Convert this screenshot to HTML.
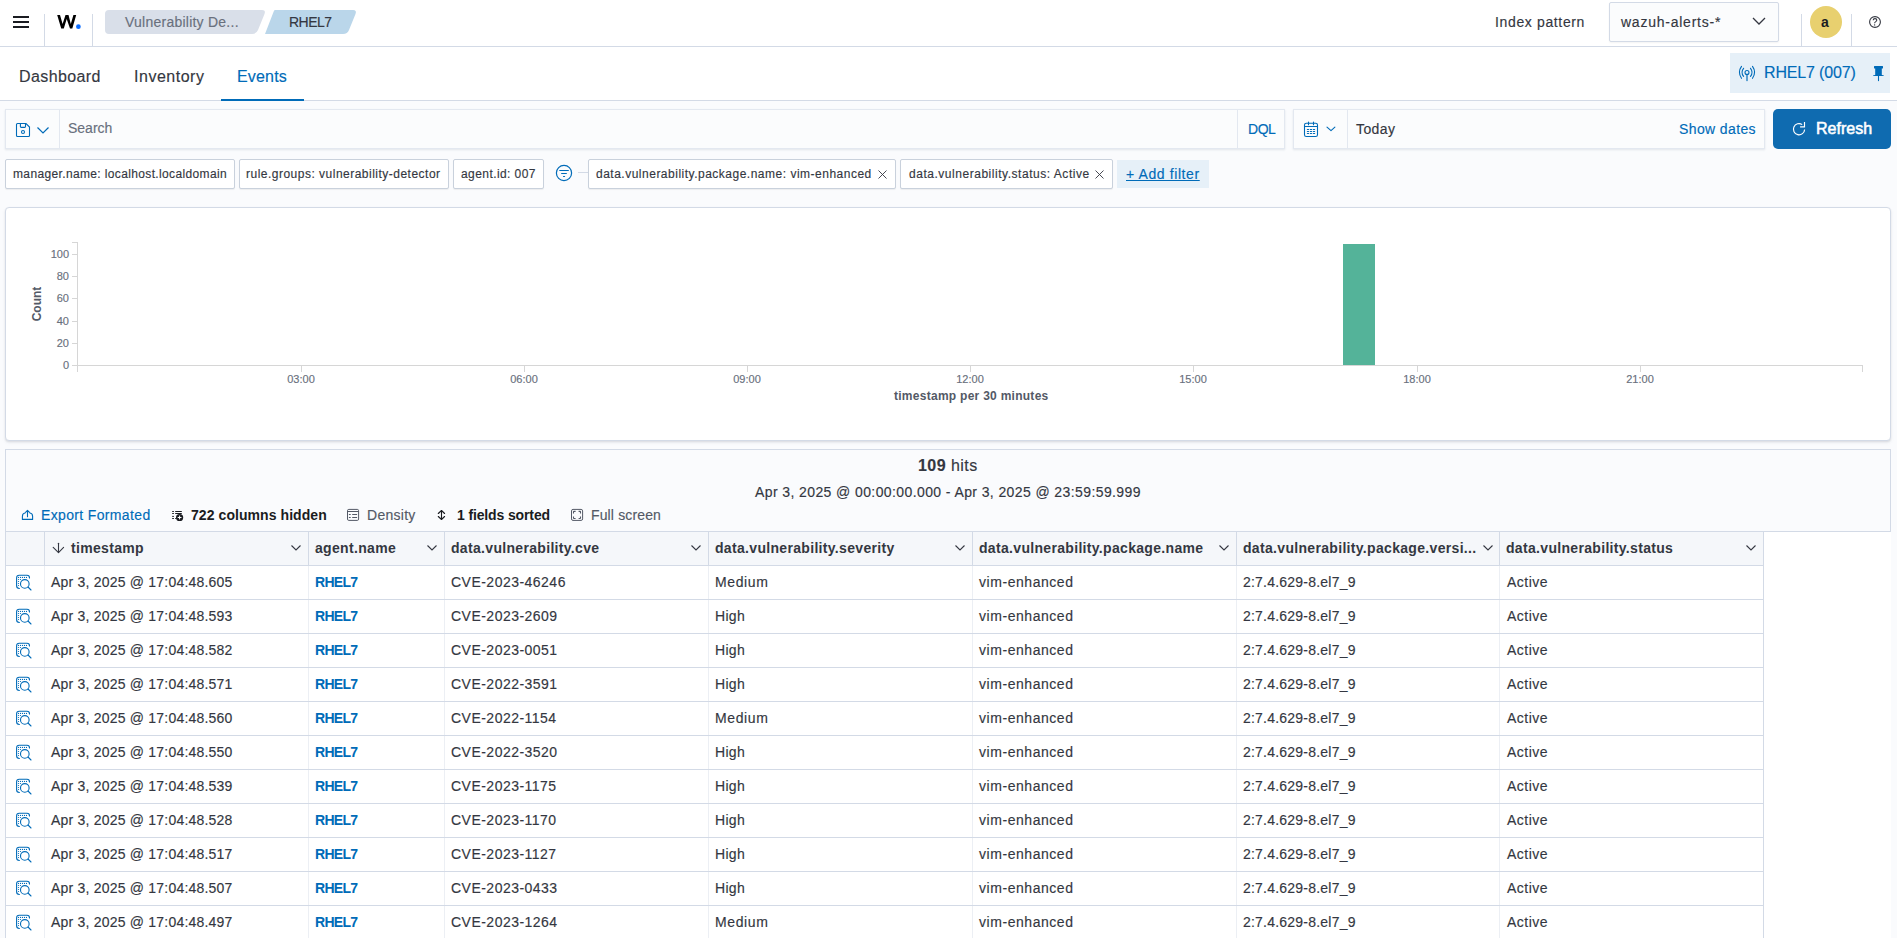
<!DOCTYPE html>
<html><head><meta charset="utf-8">
<style>
*{box-sizing:border-box;margin:0;padding:0}
html,body{width:1897px;height:938px;overflow:hidden;background:#fafbfd;font-family:"Liberation Sans",sans-serif;color:#343741}
.a{position:absolute}
.t{position:absolute;white-space:nowrap;line-height:1;font-family:"Liberation Sans",sans-serif}
.f11{font-size:11px}.f12{font-size:12px}.f14{font-size:14px}.f16{font-size:16px}
.b{font-weight:700}
.t:not(.b){-webkit-text-stroke:0.15px currentColor}
.pri{color:#006bb8}
svg{position:absolute;overflow:visible}
</style></head><body>
<!-- HEADER -->
<div class="a" style="left:0;top:0;width:1897px;height:47px;background:#fff;border-bottom:1px solid #d3dae6"></div>
<div class="a" style="left:13px;top:16px;width:16px;height:2px;background:#1a1c21"></div>
<div class="a" style="left:13px;top:21px;width:16px;height:2px;background:#1a1c21"></div>
<div class="a" style="left:13px;top:26px;width:16px;height:2px;background:#1a1c21"></div>
<div class="a" style="left:44px;top:14px;width:1px;height:32px;background:#d3dae6"></div>
<div class="a" style="left:92px;top:14px;width:1px;height:32px;background:#d3dae6"></div>
<svg style="left:0;top:0" width="90" height="40"><polygon points="57.2,15 60,15 62.6,23.9 65.5,15 68.5,15 70.8,23.9 73.4,15 76.2,15 72.3,28.6 70,28.6 66.7,19 63.8,28.6 61.2,28.6" fill="#000"/><circle cx="78.4" cy="26.7" r="2.35" fill="#0a6cff"/></svg>

<!-- breadcrumbs -->
<svg style="left:0;top:0" width="400" height="47"><path d="M109 10 H262 Q266 10 264.5 14 L258 30 Q256.5 34 252 34 H109 Q105 34 105 30 V14 Q105 10 109 10Z" fill="#d9dfe9"/><path d="M275 10 H353 Q357 10 355.5 14 L349 30 Q347.5 34 343 34 H265 L273.5 12 Q274 10 275 10Z" fill="#bad6ea"/></svg>
<div class="t f14" style="left:125px;top:15px;color:#69707d;letter-spacing:0.24px">Vulnerability De...</div>
<div class="t f14" style="left:289px;top:15px;color:#343741;letter-spacing:-0.5px">RHEL7</div>
<!-- right header -->
<div class="t f14" style="left:1495px;top:15px;color:#343741;letter-spacing:0.64px">Index pattern</div>
<div class="a" style="left:1609px;top:2px;width:170px;height:40px;background:#fbfcfd;border:1px solid #d3dae6;border-radius:2px;box-shadow:0 1px 2px rgba(0,0,0,.05)"></div>
<div class="t f14" style="left:1621px;top:15px;color:#343741;letter-spacing:0.76px">wazuh-alerts-*</div>
<svg style="left:1752px;top:17px" width="14" height="8"><path d="M1 1 L7 7 L13 1" fill="none" stroke="#343741" stroke-width="1.3"/></svg>
<div class="a" style="left:1801px;top:14px;width:1px;height:32px;background:#d3dae6"></div>
<div class="a" style="left:1810px;top:6px;width:32px;height:32px;border-radius:50%;background:#e8d06f"></div>
<div class="t f14 b" style="left:1821px;top:15px;color:#1a1c21">a</div>
<div class="a" style="left:1851px;top:14px;width:1px;height:32px;background:#d3dae6"></div>
<svg style="left:1869px;top:16px" width="13" height="13"><circle cx="6" cy="6" r="5.4" fill="none" stroke="#343741" stroke-width="1.1"/><path d="M4.2 4.3 Q4.2 2.6 6 2.6 Q7.8 2.6 7.8 4.1 Q7.8 5 6.8 5.6 Q5.6 6.3 5.6 7.3" fill="none" stroke="#343741" stroke-width="1.1"/><circle cx="5.6" cy="8.9" r="0.7" fill="#343741"/></svg>

<!-- TABS -->
<div class="a" style="left:0;top:47px;width:1897px;height:54px;background:#fff;border-bottom:1px solid #d3dae6"></div>
<div class="t f16" style="left:19px;top:69px;color:#343741;letter-spacing:0.4px">Dashboard</div>
<div class="t f16" style="left:134px;top:69px;color:#343741;letter-spacing:0.52px">Inventory</div>
<div class="t f16 pri" style="left:237px;top:69px;letter-spacing:0.18px">Events</div>
<div class="a" style="left:221px;top:99px;width:83px;height:2px;background:#006bb8"></div>
<div class="a" style="left:1730px;top:53px;width:160px;height:40px;background:#e6f0f8"></div>
<div class="t f16 pri" style="left:1764px;top:65px;letter-spacing:-0.15px">RHEL7 (007)</div>
<svg style="left:1734px;top:60px" width="30" height="26"><g fill="none" stroke="#006bb8" stroke-width="1.1" stroke-linecap="round"><path d="M7.5 6.4 Q3.3 12.35 7.5 18.3"/><path d="M9.6 8.3 Q6.4 12.35 9.6 16.4"/><path d="M16.5 8.3 Q19.6 12.35 16.5 16.4"/><path d="M18.5 6.4 Q22.7 12.35 18.5 18.3"/><circle cx="13" cy="12.5" r="2"/></g><path d="M13 14.6 V20.5" stroke="#006bb8" stroke-width="1.6" stroke-linecap="round" opacity=".75"/></svg>
<svg style="left:1866px;top:60px" width="24" height="26"><path d="M8.5 6 H16.5 Q17 6 17 6.5 V8 Q17 8.6 16.2 8.6 H15.8 V15 L17.6 15.2 Q18 15.4 17.6 16.1 H7.3 Q6.9 15.4 7.3 15.2 L9.2 15 V8.6 H8.8 Q8 8.6 8 8 V6.5 Q8 6 8.5 6Z" fill="#006bb8"/><path d="M12.5 16 V20.6" stroke="#006bb8" stroke-width="1.1" stroke-linecap="round"/></svg>


<!-- SEARCH ROW -->
<div class="a" style="left:5px;top:109px;width:1280px;height:40px;background:#fbfcfd;border:1px solid #e3e8f0;box-shadow:0 1px 2px rgba(152,162,179,.25)"></div>
<div class="a" style="left:59px;top:110px;width:1px;height:38px;background:#e3e8f0"></div>
<div class="a" style="left:1237px;top:110px;width:1px;height:38px;background:#e3e8f0"></div>
<svg style="left:16px;top:123px" width="14" height="14"><path d="M1.5 0.5 H10 L13.5 4 V12.5 Q13.5 13.5 12.5 13.5 H1.5 Q0.5 13.5 0.5 12.5 V1.5 Q0.5 0.5 1.5 0.5Z" fill="none" stroke="#006bb8" stroke-width="1.1"/><path d="M4.4 0.5 V3.6 Q4.4 4.4 5.2 4.4 H8.7 Q9.5 4.4 9.5 3.6 V0.5" fill="none" stroke="#006bb8" stroke-width="1.1"/><circle cx="7" cy="9" r="1.5" fill="none" stroke="#006bb8" stroke-width="1.1"/></svg>
<svg style="left:37px;top:127px" width="12" height="7"><path d="M0.5 0.5 L6 6 L11.5 0.5" fill="none" stroke="#006bb8" stroke-width="1.2"/></svg>
<div class="t f14" style="left:68px;top:121px;color:#69707d">Search</div>
<div class="t f14 pri" style="left:1248px;top:122px;letter-spacing:-0.45px">DQL</div>
<div class="a" style="left:1293px;top:109px;width:472px;height:40px;background:#fbfcfd;border:1px solid #e3e8f0;box-shadow:0 1px 2px rgba(152,162,179,.25)"></div>
<div class="a" style="left:1347px;top:110px;width:1px;height:38px;background:#e3e8f0"></div>
<svg style="left:1298px;top:116px" width="42" height="26"><g fill="none" stroke="#006bb8" stroke-width="1.1" stroke-linecap="round" stroke-linejoin="round"><rect x="6.5" y="7.3" width="13" height="13.2" rx="1.8"/><path d="M6.5 10.5 H19.5 M10.5 6.1 V8.7 M15.5 6.1 V8.7"/><path d="M9.4 13.5 H10.6 M12.4 13.5 H13.6 M15.4 13.5 H16.6 M9.4 15.5 H10.6 M12.4 15.5 H13.6 M15.4 15.5 H16.6 M9.4 17.5 H10.6 M12.4 17.5 H13.6 M15.4 17.5 H16.6" stroke-width="1.2"/><path d="M29 11.1 L33 14.7 L36.9 11.1"/></g></svg>

<div class="t f14" style="left:1356px;top:122px;color:#343741;letter-spacing:0.41px">Today</div>
<div class="t f14 pri" style="left:1679px;top:122px;letter-spacing:0.38px">Show dates</div>
<div class="a" style="left:1773px;top:109px;width:118px;height:40px;background:#0f6bb0;border-radius:5px"></div>
<svg style="left:1786px;top:112px" width="26" height="34"><g fill="none" stroke="#fff" stroke-width="1.15"><path d="M18.6 17.4 A5.6 5.6 0 1 1 16.2 12.6"/><path d="M18.5 10.1 V14.9 H14.1"/></g></svg>
<div class="t f16" style="left:1816px;top:121px;color:#fff;letter-spacing:0.02px;-webkit-text-stroke:0.55px #fff">Refresh</div>

<!-- FILTERS -->
<div class="a" style="left:5px;top:159px;width:230px;height:30px;background:#fff;border:1px solid #c9d1dc;border-radius:2px;box-shadow:0 1px 1px rgba(0,0,0,.06)"></div>
<div class="t f12" style="left:13px;top:168px;letter-spacing:0.36px">manager.name: localhost.localdomain</div>
<div class="a" style="left:239px;top:159px;width:210px;height:30px;background:#fff;border:1px solid #c9d1dc;border-radius:2px;box-shadow:0 1px 1px rgba(0,0,0,.06)"></div>
<div class="t f12" style="left:246px;top:168px;letter-spacing:0.49px">rule.groups: vulnerability-detector</div>
<div class="a" style="left:453px;top:159px;width:91px;height:30px;background:#fff;border:1px solid #c9d1dc;border-radius:2px;box-shadow:0 1px 1px rgba(0,0,0,.06)"></div>
<div class="t f12" style="left:461px;top:168px;letter-spacing:0.42px">agent.id: 007</div>
<svg style="left:555px;top:164px" width="18" height="18"><circle cx="9" cy="9" r="7.6" fill="none" stroke="#006bb8" stroke-width="1.2"/><path d="M4.7 6.5 H13.4 M6.6 9.5 H11.4 M8.5 12.5 H9.6" stroke="#006bb8" stroke-width="1.1" stroke-linecap="round"/></svg>
<div class="a" style="left:578px;top:172px;width:10px;height:1px;background:#d3dae6"></div>
<div class="a" style="left:588px;top:159px;width:308px;height:30px;background:#fff;border:1px solid #c9d1dc;border-radius:2px;box-shadow:0 1px 1px rgba(0,0,0,.06)"></div>
<div class="t f12" style="left:596px;top:168px;letter-spacing:0.5px">data.vulnerability.package.name: vim-enhanced</div>
<svg style="left:878px;top:170px" width="9" height="9"><path d="M0.5 0.5 L8.5 8.5 M8.5 0.5 L0.5 8.5" stroke="#343741" stroke-width="0.9"/></svg>
<div class="a" style="left:900px;top:159px;width:213px;height:30px;background:#fff;border:1px solid #c9d1dc;border-radius:2px;box-shadow:0 1px 1px rgba(0,0,0,.06)"></div>
<div class="t f12" style="left:909px;top:168px;letter-spacing:0.53px">data.vulnerability.status: Active</div>
<svg style="left:1095px;top:170px" width="9" height="9"><path d="M0.5 0.5 L8.5 8.5 M8.5 0.5 L0.5 8.5" stroke="#343741" stroke-width="0.9"/></svg>
<div class="a" style="left:1117px;top:160px;width:92px;height:28px;background:#e6f0f8"></div>
<div class="t f14 pri" style="left:1126px;top:167px;letter-spacing:0.6px;text-decoration:underline">+ Add filter</div>

<!-- CHART PANEL -->
<div class="a" style="left:5px;top:207px;width:1886px;height:234px;background:#fff;border:1px solid #d3dae6;border-radius:4px;box-shadow:0 1px 2px rgba(0,0,0,.08),0 2px 3px rgba(152,162,179,.15)"></div>
<svg style="left:0;top:0" width="1897" height="440">
<g stroke="#d6d6d6" stroke-width="1" shape-rendering="crispEdges">
<path d="M77.5 242 V372"/>
<path d="M72 242.5 H77.5"/>
<path d="M72 365.5 H1863"/>
<path d="M1862.5 365 V372"/>
<path d="M72 254.5 H77"/>
<path d="M72 276.5 H77"/>
<path d="M72 298.5 H77"/>
<path d="M72 321.5 H77"/>
<path d="M72 343.5 H77"/>
<path d="M72 365.5 H77"/>
<path d="M301.5 365 V372"/>
<path d="M524.5 365 V372"/>
<path d="M747.5 365 V372"/>
<path d="M970.5 365 V372"/>
<path d="M1193.5 365 V372"/>
<path d="M1417.5 365 V372"/>
<path d="M1640.5 365 V372"/>
</g>
<rect x="1343" y="244" width="32" height="121" fill="#54b399"/>
</svg>
<div class="t f11" style="right:1828px;top:249px;color:#69707d;text-align:right">100</div>
<div class="t f11" style="right:1828px;top:271px;color:#69707d;text-align:right">80</div>
<div class="t f11" style="right:1828px;top:293px;color:#69707d;text-align:right">60</div>
<div class="t f11" style="right:1828px;top:316px;color:#69707d;text-align:right">40</div>
<div class="t f11" style="right:1828px;top:338px;color:#69707d;text-align:right">20</div>
<div class="t f11" style="right:1828px;top:360px;color:#69707d;text-align:right">0</div>
<div class="t f11" style="left:286.5px;top:374px;width:29px;text-align:center;color:#69707d">03:00</div>
<div class="t f11" style="left:509.5px;top:374px;width:29px;text-align:center;color:#69707d">06:00</div>
<div class="t f11" style="left:732.5px;top:374px;width:29px;text-align:center;color:#69707d">09:00</div>
<div class="t f11" style="left:955.5px;top:374px;width:29px;text-align:center;color:#69707d">12:00</div>
<div class="t f11" style="left:1178.5px;top:374px;width:29px;text-align:center;color:#69707d">15:00</div>
<div class="t f11" style="left:1402.5px;top:374px;width:29px;text-align:center;color:#69707d">18:00</div>
<div class="t f11" style="left:1625.5px;top:374px;width:29px;text-align:center;color:#69707d">21:00</div>
<div class="t f12 b" style="left:894px;top:390px;color:#535966;letter-spacing:0.27px">timestamp per 30 minutes</div>
<div class="t f12 b" style="left:19px;top:298px;width:35px;text-align:center;color:#535966;transform:rotate(-90deg);transform-origin:50% 50%">Count</div>

<!-- HITS PANEL -->
<div class="a" style="left:5px;top:531px;width:1886px;height:407px;background:#fff"></div>
<div class="a" style="left:5px;top:449px;width:1886px;height:83px;background:#fafbfd;border:1px solid #d3dae6;border-bottom-color:#d3dae6"></div>
<div class="t f16" style="left:918px;top:458px;color:#343741;letter-spacing:0.46px"><span class="b">109</span> hits</div>
<div class="t f14" style="left:755px;top:485px;color:#343741;letter-spacing:0.4px">Apr 3, 2025 @ 00:00:00.000 - Apr 3, 2025 @ 23:59:59.999</div>
<svg style="left:16px;top:502px" width="24" height="24"><g fill="none" stroke="#006bb8" stroke-width="1.1" stroke-linecap="round" stroke-linejoin="round"><path d="M9 11 Q6.4 11.5 6.4 14.2 V17.4 H16.6 V14.2 Q16.6 11.5 14 11"/><path d="M11.5 14.7 V8.3 M9.5 10.3 L11.5 8.3 L13.5 10.3"/></g></svg>
<div class="t f14 pri" style="left:41px;top:508px;letter-spacing:0.35px">Export Formated</div>
<svg style="left:166px;top:502px" width="24" height="24"><g stroke="#1a1c21" stroke-width="1" fill="none"><path d="M6.2 9.5 H7.9 M9.2 9.5 H15.8 M6.2 11.5 H7.9 M9.2 11.5 H15.8 M6.2 14.4 H7.9 M6.2 16.5 H7.9 M9.2 16.5 H10.5"/></g><circle cx="13.6" cy="15.5" r="3.6" fill="#1a1c21"/><path d="M13.6 13.6 V17.4 M11.7 15.5 H15.5" stroke="#fff" stroke-width="1"/></svg>
<div class="t f14 b" style="left:191px;top:508px;color:#1a1c21;letter-spacing:0.07px">722 columns hidden</div>
<svg style="left:342px;top:502px" width="24" height="24"><g fill="none" stroke="#535966" stroke-width="1"><rect x="5.5" y="7.4" width="11.1" height="11" rx="1.3"/><path d="M5.5 9.5 H16.6"/><path d="M6.9 12.5 H8.7 M10.2 12.5 H15.1 M6.9 15.5 H8.7 M10.2 15.5 H15.1" stroke-width="1.1"/></g></svg>
<div class="t f14" style="left:367px;top:508px;color:#535966;letter-spacing:0.27px">Density</div>
<svg style="left:430px;top:502px" width="24" height="24"><g fill="none" stroke="#1a1c21" stroke-width="1.1" stroke-linecap="round" stroke-linejoin="round"><path d="M11.5 9.2 V16.7"/><path d="M8.3 11.5 L11.5 8.5 L14.6 11.5"/><path d="M8.3 14.5 L11.5 17.5 L14.6 14.5"/></g></svg>
<div class="t f14 b" style="left:457px;top:508px;color:#1a1c21;letter-spacing:-0.13px">1 fields sorted</div>
<svg style="left:565px;top:502px" width="24" height="24"><g fill="none" stroke="#535966" stroke-width="1"><rect x="6.5" y="7.4" width="11.1" height="11" rx="1.5"/><path d="M8.5 11.6 V9.9 Q8.5 9.4 9 9.4 H10.6 M13.6 9.4 H15.1 Q15.5 9.4 15.5 9.9 V11.6 M15.5 14.4 V16 Q15.5 16.5 15.1 16.5 H13.6 M10.6 16.5 H9 Q8.5 16.5 8.5 16 V14.4" stroke-width="1.1"/></g></svg>
<div class="t f14" style="left:591px;top:508px;color:#535966;letter-spacing:0.14px">Full screen</div>
<div class="a" style="left:5px;top:531px;width:1759px;height:35px;background:#f5f7fa"></div>
<svg style="left:0;top:0" width="1897" height="938"><g stroke-width="1" shape-rendering="crispEdges">
<path stroke="#d3dae6" d="M5 531.5 H1891"/>
<path stroke="#d3dae6" d="M5.5 531 V938"/>
<path stroke="#d3dae6" d="M44.5 531 V566"/>
<path stroke="#eceff4" d="M44.5 566 V938"/>
<path stroke="#d3dae6" d="M308.5 531 V566"/>
<path stroke="#eceff4" d="M308.5 566 V938"/>
<path stroke="#d3dae6" d="M444.5 531 V566"/>
<path stroke="#eceff4" d="M444.5 566 V938"/>
<path stroke="#d3dae6" d="M708.5 531 V566"/>
<path stroke="#eceff4" d="M708.5 566 V938"/>
<path stroke="#d3dae6" d="M972.5 531 V566"/>
<path stroke="#eceff4" d="M972.5 566 V938"/>
<path stroke="#d3dae6" d="M1236.5 531 V566"/>
<path stroke="#eceff4" d="M1236.5 566 V938"/>
<path stroke="#d3dae6" d="M1499.5 531 V566"/>
<path stroke="#eceff4" d="M1499.5 566 V938"/>
<path stroke="#d3dae6" d="M1763.5 531 V938"/>
<path stroke="#d3dae6" d="M5 565.5 H1764"/>
<path stroke="#d3dae6" d="M5 599.5 H1764"/>
<path stroke="#d3dae6" d="M5 633.5 H1764"/>
<path stroke="#d3dae6" d="M5 667.5 H1764"/>
<path stroke="#d3dae6" d="M5 701.5 H1764"/>
<path stroke="#d3dae6" d="M5 735.5 H1764"/>
<path stroke="#d3dae6" d="M5 769.5 H1764"/>
<path stroke="#d3dae6" d="M5 803.5 H1764"/>
<path stroke="#d3dae6" d="M5 837.5 H1764"/>
<path stroke="#d3dae6" d="M5 871.5 H1764"/>
<path stroke="#d3dae6" d="M5 905.5 H1764"/>
<path stroke="#d3dae6" d="M5 939.5 H1764"/>
</g></svg>
<svg style="left:48px;top:536px" width="24" height="24"><g fill="none" stroke="#343741" stroke-width="1.1" stroke-linecap="round" stroke-linejoin="round"><path d="M10.5 7.3 V16.4"/><path d="M5.2 11.4 L10.5 16.6 L15.6 11.4"/></g></svg>
<div class="t f14 b" style="left:71px;top:541px;color:#343741;letter-spacing:0.32px">timestamp</div>
<svg style="left:291px;top:545px" width="10" height="6"><path d="M0.5 0.5 L5 5 L9.5 0.5" fill="none" stroke="#343741" stroke-width="1.1"/></svg>
<div class="t f14 b" style="left:315px;top:541px;color:#343741;letter-spacing:0.32px">agent.name</div>
<svg style="left:427px;top:545px" width="10" height="6"><path d="M0.5 0.5 L5 5 L9.5 0.5" fill="none" stroke="#343741" stroke-width="1.1"/></svg>
<div class="t f14 b" style="left:451px;top:541px;color:#343741;letter-spacing:0.32px">data.vulnerability.cve</div>
<svg style="left:691px;top:545px" width="10" height="6"><path d="M0.5 0.5 L5 5 L9.5 0.5" fill="none" stroke="#343741" stroke-width="1.1"/></svg>
<div class="t f14 b" style="left:715px;top:541px;color:#343741;letter-spacing:0.32px">data.vulnerability.severity</div>
<svg style="left:955px;top:545px" width="10" height="6"><path d="M0.5 0.5 L5 5 L9.5 0.5" fill="none" stroke="#343741" stroke-width="1.1"/></svg>
<div class="t f14 b" style="left:979px;top:541px;color:#343741;letter-spacing:0.32px">data.vulnerability.package.name</div>
<svg style="left:1219px;top:545px" width="10" height="6"><path d="M0.5 0.5 L5 5 L9.5 0.5" fill="none" stroke="#343741" stroke-width="1.1"/></svg>
<div class="t f14 b" style="left:1243px;top:541px;color:#343741;letter-spacing:0.32px">data.vulnerability.package.versi...</div>
<svg style="left:1483px;top:545px" width="10" height="6"><path d="M0.5 0.5 L5 5 L9.5 0.5" fill="none" stroke="#343741" stroke-width="1.1"/></svg>
<div class="t f14 b" style="left:1506px;top:541px;color:#343741;letter-spacing:0.32px">data.vulnerability.status</div>
<svg style="left:1746px;top:545px" width="10" height="6"><path d="M0.5 0.5 L5 5 L9.5 0.5" fill="none" stroke="#343741" stroke-width="1.1"/></svg>
<svg style="left:12px;top:572px" width="24" height="24"><g fill="none" stroke="#006bb8" stroke-width="1.1" stroke-linecap="round"><path d="M7.4 16.5 Q4.6 16.5 4.6 13.8 V6 Q4.6 3.3 7.3 3.3 H15 Q17.5 3.3 17.5 6"/><circle cx="12.8" cy="11.9" r="4.3"/><path d="M16 15 L19 18"/></g><g fill="#006bb8"><circle cx="6.5" cy="5.4" r=".6"/><circle cx="8.5" cy="5.4" r=".6"/><circle cx="10.5" cy="5.4" r=".6"/><circle cx="12.5" cy="5.4" r=".6"/><circle cx="14.5" cy="5.4" r=".6"/><circle cx="6.5" cy="7.5" r=".6"/><circle cx="8.5" cy="7.5" r=".6"/><circle cx="6.5" cy="9.5" r=".6"/><circle cx="6.5" cy="11.5" r=".6"/><circle cx="6.5" cy="13.5" r=".6"/></g></svg>
<div class="t f14" style="left:51px;top:575px;letter-spacing:0.21px">Apr 3, 2025 @ 17:04:48.605</div>
<div class="t f14 b pri" style="left:315px;top:575px;letter-spacing:-0.7px">RHEL7</div>
<div class="t f14" style="left:451px;top:575px;letter-spacing:0.48px">CVE-2023-46246</div>
<div class="t f14" style="left:715px;top:575px;letter-spacing:0.6px">Medium</div>
<div class="t f14" style="left:979px;top:575px;letter-spacing:0.55px">vim-enhanced</div>
<div class="t f14" style="left:1243px;top:575px;letter-spacing:0.22px">2:7.4.629-8.el7_9</div>
<div class="t f14" style="left:1507px;top:575px;letter-spacing:0.5px">Active</div>
<svg style="left:12px;top:606px" width="24" height="24"><g fill="none" stroke="#006bb8" stroke-width="1.1" stroke-linecap="round"><path d="M7.4 16.5 Q4.6 16.5 4.6 13.8 V6 Q4.6 3.3 7.3 3.3 H15 Q17.5 3.3 17.5 6"/><circle cx="12.8" cy="11.9" r="4.3"/><path d="M16 15 L19 18"/></g><g fill="#006bb8"><circle cx="6.5" cy="5.4" r=".6"/><circle cx="8.5" cy="5.4" r=".6"/><circle cx="10.5" cy="5.4" r=".6"/><circle cx="12.5" cy="5.4" r=".6"/><circle cx="14.5" cy="5.4" r=".6"/><circle cx="6.5" cy="7.5" r=".6"/><circle cx="8.5" cy="7.5" r=".6"/><circle cx="6.5" cy="9.5" r=".6"/><circle cx="6.5" cy="11.5" r=".6"/><circle cx="6.5" cy="13.5" r=".6"/></g></svg>
<div class="t f14" style="left:51px;top:609px;letter-spacing:0.21px">Apr 3, 2025 @ 17:04:48.593</div>
<div class="t f14 b pri" style="left:315px;top:609px;letter-spacing:-0.7px">RHEL7</div>
<div class="t f14" style="left:451px;top:609px;letter-spacing:0.48px">CVE-2023-2609</div>
<div class="t f14" style="left:715px;top:609px;letter-spacing:0.3px">High</div>
<div class="t f14" style="left:979px;top:609px;letter-spacing:0.55px">vim-enhanced</div>
<div class="t f14" style="left:1243px;top:609px;letter-spacing:0.22px">2:7.4.629-8.el7_9</div>
<div class="t f14" style="left:1507px;top:609px;letter-spacing:0.5px">Active</div>
<svg style="left:12px;top:640px" width="24" height="24"><g fill="none" stroke="#006bb8" stroke-width="1.1" stroke-linecap="round"><path d="M7.4 16.5 Q4.6 16.5 4.6 13.8 V6 Q4.6 3.3 7.3 3.3 H15 Q17.5 3.3 17.5 6"/><circle cx="12.8" cy="11.9" r="4.3"/><path d="M16 15 L19 18"/></g><g fill="#006bb8"><circle cx="6.5" cy="5.4" r=".6"/><circle cx="8.5" cy="5.4" r=".6"/><circle cx="10.5" cy="5.4" r=".6"/><circle cx="12.5" cy="5.4" r=".6"/><circle cx="14.5" cy="5.4" r=".6"/><circle cx="6.5" cy="7.5" r=".6"/><circle cx="8.5" cy="7.5" r=".6"/><circle cx="6.5" cy="9.5" r=".6"/><circle cx="6.5" cy="11.5" r=".6"/><circle cx="6.5" cy="13.5" r=".6"/></g></svg>
<div class="t f14" style="left:51px;top:643px;letter-spacing:0.21px">Apr 3, 2025 @ 17:04:48.582</div>
<div class="t f14 b pri" style="left:315px;top:643px;letter-spacing:-0.7px">RHEL7</div>
<div class="t f14" style="left:451px;top:643px;letter-spacing:0.48px">CVE-2023-0051</div>
<div class="t f14" style="left:715px;top:643px;letter-spacing:0.3px">High</div>
<div class="t f14" style="left:979px;top:643px;letter-spacing:0.55px">vim-enhanced</div>
<div class="t f14" style="left:1243px;top:643px;letter-spacing:0.22px">2:7.4.629-8.el7_9</div>
<div class="t f14" style="left:1507px;top:643px;letter-spacing:0.5px">Active</div>
<svg style="left:12px;top:674px" width="24" height="24"><g fill="none" stroke="#006bb8" stroke-width="1.1" stroke-linecap="round"><path d="M7.4 16.5 Q4.6 16.5 4.6 13.8 V6 Q4.6 3.3 7.3 3.3 H15 Q17.5 3.3 17.5 6"/><circle cx="12.8" cy="11.9" r="4.3"/><path d="M16 15 L19 18"/></g><g fill="#006bb8"><circle cx="6.5" cy="5.4" r=".6"/><circle cx="8.5" cy="5.4" r=".6"/><circle cx="10.5" cy="5.4" r=".6"/><circle cx="12.5" cy="5.4" r=".6"/><circle cx="14.5" cy="5.4" r=".6"/><circle cx="6.5" cy="7.5" r=".6"/><circle cx="8.5" cy="7.5" r=".6"/><circle cx="6.5" cy="9.5" r=".6"/><circle cx="6.5" cy="11.5" r=".6"/><circle cx="6.5" cy="13.5" r=".6"/></g></svg>
<div class="t f14" style="left:51px;top:677px;letter-spacing:0.21px">Apr 3, 2025 @ 17:04:48.571</div>
<div class="t f14 b pri" style="left:315px;top:677px;letter-spacing:-0.7px">RHEL7</div>
<div class="t f14" style="left:451px;top:677px;letter-spacing:0.48px">CVE-2022-3591</div>
<div class="t f14" style="left:715px;top:677px;letter-spacing:0.3px">High</div>
<div class="t f14" style="left:979px;top:677px;letter-spacing:0.55px">vim-enhanced</div>
<div class="t f14" style="left:1243px;top:677px;letter-spacing:0.22px">2:7.4.629-8.el7_9</div>
<div class="t f14" style="left:1507px;top:677px;letter-spacing:0.5px">Active</div>
<svg style="left:12px;top:708px" width="24" height="24"><g fill="none" stroke="#006bb8" stroke-width="1.1" stroke-linecap="round"><path d="M7.4 16.5 Q4.6 16.5 4.6 13.8 V6 Q4.6 3.3 7.3 3.3 H15 Q17.5 3.3 17.5 6"/><circle cx="12.8" cy="11.9" r="4.3"/><path d="M16 15 L19 18"/></g><g fill="#006bb8"><circle cx="6.5" cy="5.4" r=".6"/><circle cx="8.5" cy="5.4" r=".6"/><circle cx="10.5" cy="5.4" r=".6"/><circle cx="12.5" cy="5.4" r=".6"/><circle cx="14.5" cy="5.4" r=".6"/><circle cx="6.5" cy="7.5" r=".6"/><circle cx="8.5" cy="7.5" r=".6"/><circle cx="6.5" cy="9.5" r=".6"/><circle cx="6.5" cy="11.5" r=".6"/><circle cx="6.5" cy="13.5" r=".6"/></g></svg>
<div class="t f14" style="left:51px;top:711px;letter-spacing:0.21px">Apr 3, 2025 @ 17:04:48.560</div>
<div class="t f14 b pri" style="left:315px;top:711px;letter-spacing:-0.7px">RHEL7</div>
<div class="t f14" style="left:451px;top:711px;letter-spacing:0.48px">CVE-2022-1154</div>
<div class="t f14" style="left:715px;top:711px;letter-spacing:0.6px">Medium</div>
<div class="t f14" style="left:979px;top:711px;letter-spacing:0.55px">vim-enhanced</div>
<div class="t f14" style="left:1243px;top:711px;letter-spacing:0.22px">2:7.4.629-8.el7_9</div>
<div class="t f14" style="left:1507px;top:711px;letter-spacing:0.5px">Active</div>
<svg style="left:12px;top:742px" width="24" height="24"><g fill="none" stroke="#006bb8" stroke-width="1.1" stroke-linecap="round"><path d="M7.4 16.5 Q4.6 16.5 4.6 13.8 V6 Q4.6 3.3 7.3 3.3 H15 Q17.5 3.3 17.5 6"/><circle cx="12.8" cy="11.9" r="4.3"/><path d="M16 15 L19 18"/></g><g fill="#006bb8"><circle cx="6.5" cy="5.4" r=".6"/><circle cx="8.5" cy="5.4" r=".6"/><circle cx="10.5" cy="5.4" r=".6"/><circle cx="12.5" cy="5.4" r=".6"/><circle cx="14.5" cy="5.4" r=".6"/><circle cx="6.5" cy="7.5" r=".6"/><circle cx="8.5" cy="7.5" r=".6"/><circle cx="6.5" cy="9.5" r=".6"/><circle cx="6.5" cy="11.5" r=".6"/><circle cx="6.5" cy="13.5" r=".6"/></g></svg>
<div class="t f14" style="left:51px;top:745px;letter-spacing:0.21px">Apr 3, 2025 @ 17:04:48.550</div>
<div class="t f14 b pri" style="left:315px;top:745px;letter-spacing:-0.7px">RHEL7</div>
<div class="t f14" style="left:451px;top:745px;letter-spacing:0.48px">CVE-2022-3520</div>
<div class="t f14" style="left:715px;top:745px;letter-spacing:0.3px">High</div>
<div class="t f14" style="left:979px;top:745px;letter-spacing:0.55px">vim-enhanced</div>
<div class="t f14" style="left:1243px;top:745px;letter-spacing:0.22px">2:7.4.629-8.el7_9</div>
<div class="t f14" style="left:1507px;top:745px;letter-spacing:0.5px">Active</div>
<svg style="left:12px;top:776px" width="24" height="24"><g fill="none" stroke="#006bb8" stroke-width="1.1" stroke-linecap="round"><path d="M7.4 16.5 Q4.6 16.5 4.6 13.8 V6 Q4.6 3.3 7.3 3.3 H15 Q17.5 3.3 17.5 6"/><circle cx="12.8" cy="11.9" r="4.3"/><path d="M16 15 L19 18"/></g><g fill="#006bb8"><circle cx="6.5" cy="5.4" r=".6"/><circle cx="8.5" cy="5.4" r=".6"/><circle cx="10.5" cy="5.4" r=".6"/><circle cx="12.5" cy="5.4" r=".6"/><circle cx="14.5" cy="5.4" r=".6"/><circle cx="6.5" cy="7.5" r=".6"/><circle cx="8.5" cy="7.5" r=".6"/><circle cx="6.5" cy="9.5" r=".6"/><circle cx="6.5" cy="11.5" r=".6"/><circle cx="6.5" cy="13.5" r=".6"/></g></svg>
<div class="t f14" style="left:51px;top:779px;letter-spacing:0.21px">Apr 3, 2025 @ 17:04:48.539</div>
<div class="t f14 b pri" style="left:315px;top:779px;letter-spacing:-0.7px">RHEL7</div>
<div class="t f14" style="left:451px;top:779px;letter-spacing:0.48px">CVE-2023-1175</div>
<div class="t f14" style="left:715px;top:779px;letter-spacing:0.3px">High</div>
<div class="t f14" style="left:979px;top:779px;letter-spacing:0.55px">vim-enhanced</div>
<div class="t f14" style="left:1243px;top:779px;letter-spacing:0.22px">2:7.4.629-8.el7_9</div>
<div class="t f14" style="left:1507px;top:779px;letter-spacing:0.5px">Active</div>
<svg style="left:12px;top:810px" width="24" height="24"><g fill="none" stroke="#006bb8" stroke-width="1.1" stroke-linecap="round"><path d="M7.4 16.5 Q4.6 16.5 4.6 13.8 V6 Q4.6 3.3 7.3 3.3 H15 Q17.5 3.3 17.5 6"/><circle cx="12.8" cy="11.9" r="4.3"/><path d="M16 15 L19 18"/></g><g fill="#006bb8"><circle cx="6.5" cy="5.4" r=".6"/><circle cx="8.5" cy="5.4" r=".6"/><circle cx="10.5" cy="5.4" r=".6"/><circle cx="12.5" cy="5.4" r=".6"/><circle cx="14.5" cy="5.4" r=".6"/><circle cx="6.5" cy="7.5" r=".6"/><circle cx="8.5" cy="7.5" r=".6"/><circle cx="6.5" cy="9.5" r=".6"/><circle cx="6.5" cy="11.5" r=".6"/><circle cx="6.5" cy="13.5" r=".6"/></g></svg>
<div class="t f14" style="left:51px;top:813px;letter-spacing:0.21px">Apr 3, 2025 @ 17:04:48.528</div>
<div class="t f14 b pri" style="left:315px;top:813px;letter-spacing:-0.7px">RHEL7</div>
<div class="t f14" style="left:451px;top:813px;letter-spacing:0.48px">CVE-2023-1170</div>
<div class="t f14" style="left:715px;top:813px;letter-spacing:0.3px">High</div>
<div class="t f14" style="left:979px;top:813px;letter-spacing:0.55px">vim-enhanced</div>
<div class="t f14" style="left:1243px;top:813px;letter-spacing:0.22px">2:7.4.629-8.el7_9</div>
<div class="t f14" style="left:1507px;top:813px;letter-spacing:0.5px">Active</div>
<svg style="left:12px;top:844px" width="24" height="24"><g fill="none" stroke="#006bb8" stroke-width="1.1" stroke-linecap="round"><path d="M7.4 16.5 Q4.6 16.5 4.6 13.8 V6 Q4.6 3.3 7.3 3.3 H15 Q17.5 3.3 17.5 6"/><circle cx="12.8" cy="11.9" r="4.3"/><path d="M16 15 L19 18"/></g><g fill="#006bb8"><circle cx="6.5" cy="5.4" r=".6"/><circle cx="8.5" cy="5.4" r=".6"/><circle cx="10.5" cy="5.4" r=".6"/><circle cx="12.5" cy="5.4" r=".6"/><circle cx="14.5" cy="5.4" r=".6"/><circle cx="6.5" cy="7.5" r=".6"/><circle cx="8.5" cy="7.5" r=".6"/><circle cx="6.5" cy="9.5" r=".6"/><circle cx="6.5" cy="11.5" r=".6"/><circle cx="6.5" cy="13.5" r=".6"/></g></svg>
<div class="t f14" style="left:51px;top:847px;letter-spacing:0.21px">Apr 3, 2025 @ 17:04:48.517</div>
<div class="t f14 b pri" style="left:315px;top:847px;letter-spacing:-0.7px">RHEL7</div>
<div class="t f14" style="left:451px;top:847px;letter-spacing:0.48px">CVE-2023-1127</div>
<div class="t f14" style="left:715px;top:847px;letter-spacing:0.3px">High</div>
<div class="t f14" style="left:979px;top:847px;letter-spacing:0.55px">vim-enhanced</div>
<div class="t f14" style="left:1243px;top:847px;letter-spacing:0.22px">2:7.4.629-8.el7_9</div>
<div class="t f14" style="left:1507px;top:847px;letter-spacing:0.5px">Active</div>
<svg style="left:12px;top:878px" width="24" height="24"><g fill="none" stroke="#006bb8" stroke-width="1.1" stroke-linecap="round"><path d="M7.4 16.5 Q4.6 16.5 4.6 13.8 V6 Q4.6 3.3 7.3 3.3 H15 Q17.5 3.3 17.5 6"/><circle cx="12.8" cy="11.9" r="4.3"/><path d="M16 15 L19 18"/></g><g fill="#006bb8"><circle cx="6.5" cy="5.4" r=".6"/><circle cx="8.5" cy="5.4" r=".6"/><circle cx="10.5" cy="5.4" r=".6"/><circle cx="12.5" cy="5.4" r=".6"/><circle cx="14.5" cy="5.4" r=".6"/><circle cx="6.5" cy="7.5" r=".6"/><circle cx="8.5" cy="7.5" r=".6"/><circle cx="6.5" cy="9.5" r=".6"/><circle cx="6.5" cy="11.5" r=".6"/><circle cx="6.5" cy="13.5" r=".6"/></g></svg>
<div class="t f14" style="left:51px;top:881px;letter-spacing:0.21px">Apr 3, 2025 @ 17:04:48.507</div>
<div class="t f14 b pri" style="left:315px;top:881px;letter-spacing:-0.7px">RHEL7</div>
<div class="t f14" style="left:451px;top:881px;letter-spacing:0.48px">CVE-2023-0433</div>
<div class="t f14" style="left:715px;top:881px;letter-spacing:0.3px">High</div>
<div class="t f14" style="left:979px;top:881px;letter-spacing:0.55px">vim-enhanced</div>
<div class="t f14" style="left:1243px;top:881px;letter-spacing:0.22px">2:7.4.629-8.el7_9</div>
<div class="t f14" style="left:1507px;top:881px;letter-spacing:0.5px">Active</div>
<svg style="left:12px;top:912px" width="24" height="24"><g fill="none" stroke="#006bb8" stroke-width="1.1" stroke-linecap="round"><path d="M7.4 16.5 Q4.6 16.5 4.6 13.8 V6 Q4.6 3.3 7.3 3.3 H15 Q17.5 3.3 17.5 6"/><circle cx="12.8" cy="11.9" r="4.3"/><path d="M16 15 L19 18"/></g><g fill="#006bb8"><circle cx="6.5" cy="5.4" r=".6"/><circle cx="8.5" cy="5.4" r=".6"/><circle cx="10.5" cy="5.4" r=".6"/><circle cx="12.5" cy="5.4" r=".6"/><circle cx="14.5" cy="5.4" r=".6"/><circle cx="6.5" cy="7.5" r=".6"/><circle cx="8.5" cy="7.5" r=".6"/><circle cx="6.5" cy="9.5" r=".6"/><circle cx="6.5" cy="11.5" r=".6"/><circle cx="6.5" cy="13.5" r=".6"/></g></svg>
<div class="t f14" style="left:51px;top:915px;letter-spacing:0.21px">Apr 3, 2025 @ 17:04:48.497</div>
<div class="t f14 b pri" style="left:315px;top:915px;letter-spacing:-0.7px">RHEL7</div>
<div class="t f14" style="left:451px;top:915px;letter-spacing:0.48px">CVE-2023-1264</div>
<div class="t f14" style="left:715px;top:915px;letter-spacing:0.6px">Medium</div>
<div class="t f14" style="left:979px;top:915px;letter-spacing:0.55px">vim-enhanced</div>
<div class="t f14" style="left:1243px;top:915px;letter-spacing:0.22px">2:7.4.629-8.el7_9</div>
<div class="t f14" style="left:1507px;top:915px;letter-spacing:0.5px">Active</div>
</body></html>
